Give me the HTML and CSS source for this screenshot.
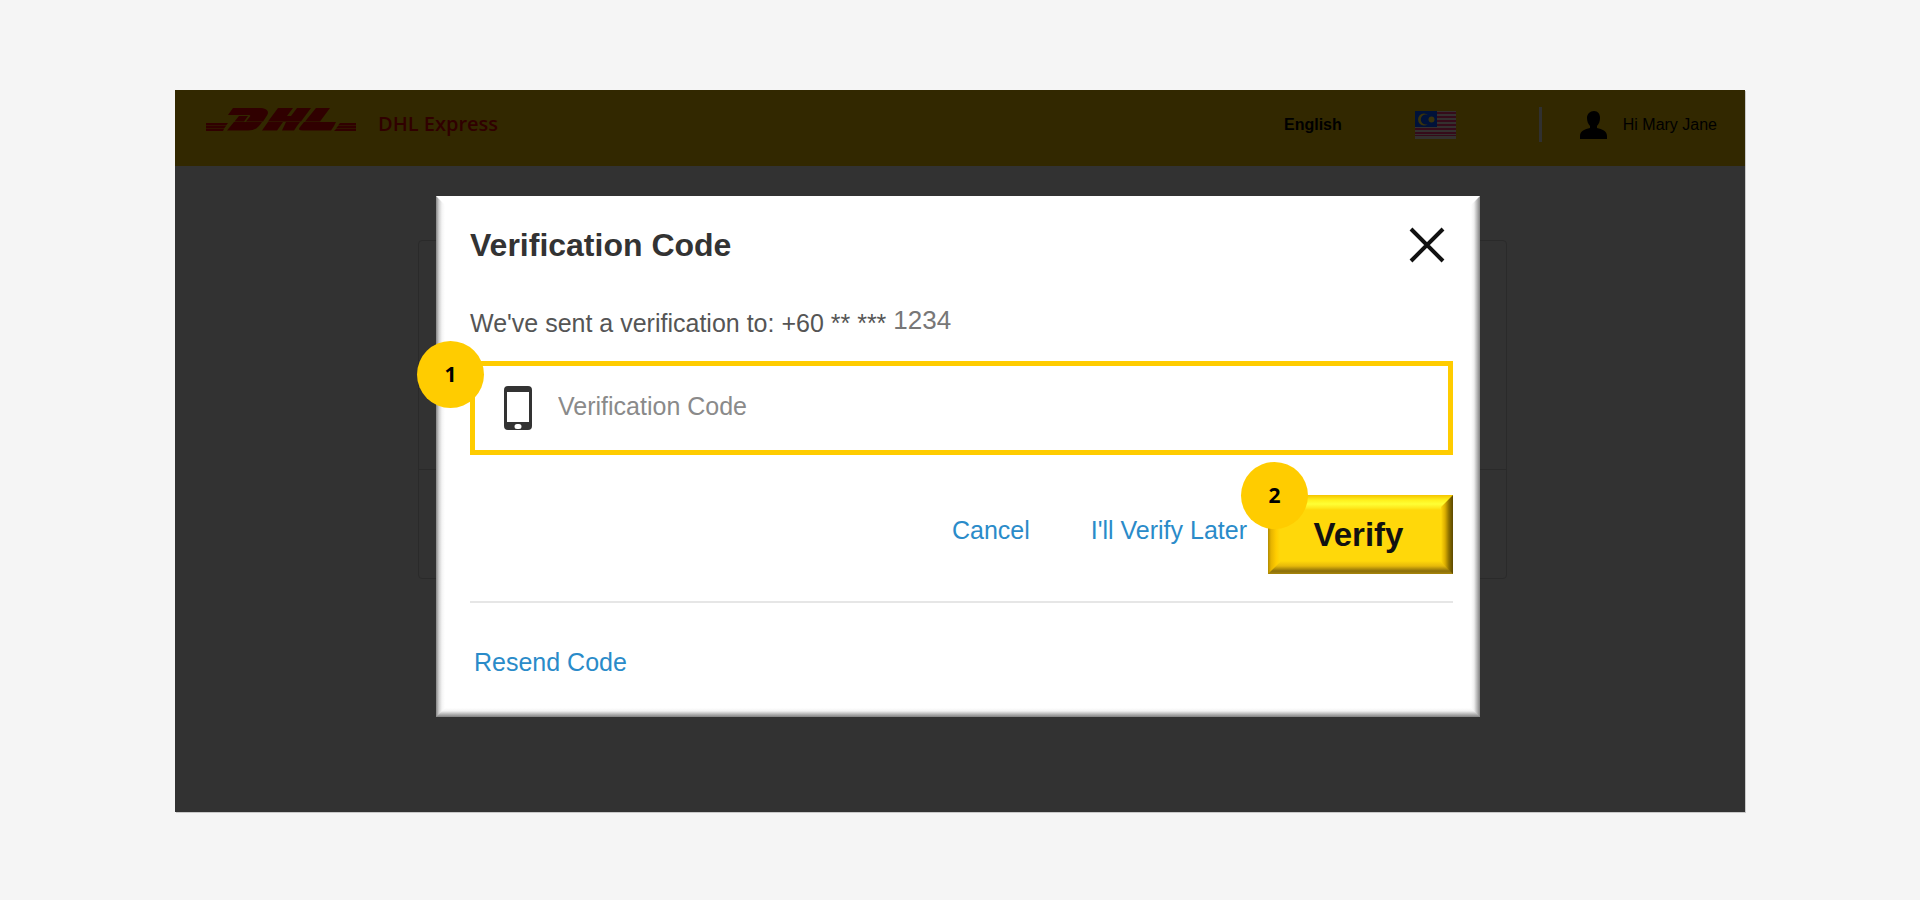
FILE: index.html
```html
<!DOCTYPE html>
<html lang="en">
<head>
<meta charset="utf-8">
<title>DHL Express – Verification Code</title>
<link rel="stylesheet" href="styles.css">
</head>
<body>
<div class="stage">
  <header class="topbar">
    <a class="brand" href="#" aria-label="DHL Express home">
      <svg class="brand-logo" viewBox="0 0 150 23" aria-hidden="true">
        <path d="M27 0H53C62 0 64 4 60 9L57 13.500H40L44 8.500Q45 7 43 7H22ZM33 8H42L38 13.500H28.500ZM28 14H56C52 20 49 22.500 42 22.500H21Z"/>
        <path d="M72 0H87L81 8H85L91 0H105L95 13.500H62ZM62 14H77L71 22.500H56ZM80 14H94L91 18L88 22.500H76Z"/>
        <path d="M110 0H124L114 13.500H99ZM98 14H130L128 18L125 22.500H97Q91 22.500 94 19Z"/>
        <path d="M0 15H22L20 17.500H0ZM0 18H20L18 20.500H0ZM0 21H18L17 23H0ZM134 15H150V17.500H132ZM132 18H150V20.500H130ZM130 21H150V23H128Z"/>
      </svg>
      <span class="brand-name">DHL Express</span>
    </a>
    <div class="tools">
      <a class="language" href="#">English</a>
      <svg class="flag" viewBox="0 0 41 28" role="img" aria-label="Malaysia">
        <path fill="#34302f" d="M0 0h41v28H0z"/>
        <path fill="#350b1a" d="M0 1h41v2H0zM0 5h41v2H0zM0 9h41v2H0zM0 13h41v2H0zM0 17h41v2H0zM0 21h41v2H0zM0 24h41v1H0z"/>
        <path fill="#00123a" d="M0 0h22v16H0z"/>
        <path fill="#39330c" d="M13 4a5 5 0 1 0 0 9 6 6 0 1 1 0-9z"/>
        <circle fill="#39330c" cx="16.500" cy="8.500" r="3"/>
      </svg>
      <a class="account" href="#">
        <svg class="user-icon" viewBox="0 0 27 28" aria-hidden="true"><path d="M14 0c4 0 6 3 6 7 0 3-1 6-3 8v2c5 1 10 3 10 8v3H0v-3c0-5 5-7 10-8v-2C8 13 7 10 7 7c0-4 3-7 7-7z"/></svg>
        <span>Hi Mary Jane</span>
      </a>
    </div>
  </header>
  <main class="page">
    <div class="panel"><div class="panel-top"></div></div>
    <section class="dialog" role="dialog" aria-labelledby="dialog-title">
      <div class="dialog-head">
        <h1 class="dialog-title" id="dialog-title">Verification Code</h1>
        <button class="close" type="button" aria-label="Close">
          <svg class="close-icon" viewBox="0 0 36 36" aria-hidden="true"><path d="M2 2L34 34M34 2L2 34"/></svg>
        </button>
      </div>
      <p class="message">We've sent a verification to: +60 ** *** <span class="digits">1234</span></p>
      <form class="form">
        <div class="field">
          <span class="badge">1</span>
          <label class="field-label" for="code" aria-label="Verification Code">
            <svg class="phone-icon" viewBox="0 0 28 44" aria-hidden="true"><path fill-rule="evenodd" d="M4 0h20a4 4 0 0 1 4 4v36a4 4 0 0 1-4 4H4a4 4 0 0 1-4-4V4a4 4 0 0 1 4-4zM3 6v30h22V6zM13 38a2 2 0 0 0 0 5h2a2 2 0 0 0 0-5z"/></svg>
          </label>
          <input class="field-input" id="code" type="text" placeholder="Verification Code">
        </div>
        <div class="actions">
          <a class="link" href="#">Cancel</a>
          <a class="link" href="#">I'll Verify Later</a>
          <div class="verify-wrap">
            <button class="verify" type="button">Verify</button>
            <span class="badge badge-verify">2</span>
          </div>
        </div>
      </form>
      <div class="dialog-foot"><a class="link" href="#">Resend Code</a></div>
    </section>
  </main>
</div>
</body>
</html>
```
FILE: styles.css
```css
* { box-sizing: border-box; }

body {
  margin: 0;
  padding: 90px 24px;
  background: #f5f5f5;
  font-family: "Liberation Sans", Arial, sans-serif;
}

a { color: inherit; text-decoration: none; }

.stage {
  max-width: 1570px;
  margin: 0 auto;
  background: #323232;
  box-shadow: 1px 1px 0 #c8c8c8;
}

.topbar {
  display: flex;
  justify-content: space-between;
  align-items: flex-start;
  padding: 17px 28px 24px 31px;
  background: #322800;
  font-size: 16px;
  line-height: 35px;
}

.brand { display: flex; gap: 22px; color: #300000; }
.brand-logo { width: 150px; height: 23px; margin-top: 1px; fill: #300000; }
.brand-name { font: 600 20px/33px "Open Sans", sans-serif; }

.tools { display: flex; align-items: center; color: #000; }
.language { font-weight: bold; }
.flag { width: 41px; height: 28px; margin: 0 83px 0 73px; }
.account {
  display: flex;
  align-items: center;
  gap: 16px;
  padding-left: 38px;
  border-left: 3px solid #303030;
}
.user-icon { width: 27px; height: 28px; }

.page {
  display: grid;
  justify-items: center;
  align-items: start;
  padding: 30px 24px 95px;
}
.panel, .dialog { grid-area: 1 / 1; }

.panel {
  width: 100%;
  max-width: 1089px;
  height: 339px;
  margin: 44px 0 0 4px;
  border: 1px solid #2a2a2a;
  border-radius: 4px;
}
.panel-top { height: 229px; border-bottom: 1px solid #2a2a2a; }

.dialog {
  position: relative;
  width: 100%;
  max-width: 1044px;
  margin-right: 4px;
  padding: 28px 27px 38px 34px;
  background: linear-gradient(to top, #808080, #b8b8b8 3px, #f2f2f2 6px, #fff 9px);
}
/* Bevelled sides, mitred at the corners */
.dialog::before,
.dialog::after {
  content: "";
  position: absolute;
  top: 0;
  bottom: 0;
  width: 9px;
}
.dialog::before {
  left: 0;
  background: linear-gradient(to right, #858585, #d0d0d0 3px, #f5f5f5 6px, #fff);
  clip-path: polygon(0 0, 100% 9px, 100% calc(100% - 9px), 0 100%);
}
.dialog::after {
  right: 0;
  background: linear-gradient(to left, #808080, #b8b8b8 3px, #f0f0f0 6px, #fff);
  clip-path: polygon(100% 0, 0 9px, 0 calc(100% - 9px), 100% 100%);
}

.dialog-head { display: flex; justify-content: space-between; align-items: center; }
.dialog-title { margin: 0; color: #333; font-size: 32px; line-height: 42px; }
.close { margin-right: 8px; padding: 0; border: 0; background: none; }
.close-icon {
  display: block;
  width: 36px;
  height: 36px;
  fill: none;
  stroke: #111;
  stroke-width: 4;
}

.message { margin: 40px 0 21px; color: #555; font-size: 25px; line-height: 34px; }
.digits { color: #777; font-size: 26px; vertical-align: 3px; line-height: 1; }

.field {
  position: relative;
  display: flex;
  align-items: center;
  height: 94px;
  padding: 0 0 0 29px;
  border: 5px solid #fc0;
  background: #fff;
}
.phone-icon { display: block; width: 28px; height: 44px; fill: #333; }
.field-input {
  flex: 1;
  min-width: 0;
  margin-left: 26px;
  padding: 0 0 4px;
  border: 0;
  outline: 0;
  background: none;
  color: #333;
  font: 25px/32px "Liberation Sans", Arial, sans-serif;
}
.field-input::placeholder { color: #8a8a8a; opacity: 1; }

.badge {
  position: absolute;
  top: -25px;
  left: -58px;
  width: 67px;
  height: 67px;
  border-radius: 50%;
  background: #fc0;
  color: #000;
  font: bold 21px/67px "Open Sans", sans-serif;
  text-align: center;
}
.badge-verify { top: -33px; left: -27px; }

.actions {
  display: flex;
  justify-content: flex-end;
  align-items: flex-start;
  padding: 40px 0 27px;
}
.link { color: #2a8bc9; font-size: 25px; line-height: 34px; }
.actions .link { margin: 18px 0 0 61px; }
.verify-wrap { position: relative; margin-left: 21px; }
.verify {
  position: relative;
  display: block;
  width: 185px;
  height: 79px;
  padding: 0 4px 0 0;
  border: 0;
  background: linear-gradient(to bottom, #f5c400, #fff01c 5px, #ffff35 9px, #ffe81c 13px, #ffd80a 15px, #ffd80a 66px, #e6b90a 71px, #8a6e0a 76px, #a8860a);
  color: #111;
  font: bold 33px/79px "Liberation Sans", Arial, sans-serif;
}
.verify::before,
.verify::after {
  content: "";
  position: absolute;
  top: 0;
  bottom: 0;
  width: 12px;
}
.verify::before {
  left: 0;
  background: linear-gradient(to right, #b08a00, #e6b400 3px, #fc0 8px, #ffd80a);
  clip-path: polygon(0 0, 100% 12px, 100% calc(100% - 12px), 0 100%);
}
.verify::after {
  right: 0;
  background: linear-gradient(to left, #5c4800, #8c7000 4px, #dcae00 8px, #ffd80a);
  clip-path: polygon(100% 0, 0 12px, 0 calc(100% - 12px), 100% 100%);
}

.dialog-foot { padding: 42px 0 0 4px; border-top: 2px solid #e6e6e6; }
```
